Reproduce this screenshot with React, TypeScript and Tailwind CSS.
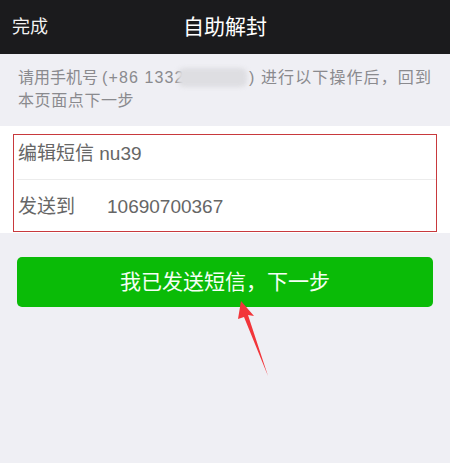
export default function App() {
  return (
    <div
      className="relative w-[450px] h-[463px] bg-[#efeff4] overflow-hidden"
      style={{ fontFamily: '"Liberation Sans", "Noto Sans CJK SC", sans-serif' }}
    >
      {/* Nav bar */}
      <div className="relative h-[54px] bg-[#1b1b1d] flex items-center">
        <span className="pl-3 text-[18px] text-[#f2f2f2]">完成</span>
        <span className="absolute left-0 right-0 text-center text-[21px] text-white pointer-events-none">
          自助解封
        </span>
      </div>

      {/* Notice */}
      <div className="px-[18px] pt-[12px] pb-[14px] text-[16px] leading-[23px] text-[#8a8a8e] whitespace-nowrap">
        <div className="flex items-center">
          <span>请用手机号</span>
          <span className="ml-[4px] tracking-[1.1px]">(+86 1332</span>
          <span className="w-[70px] h-[19px] -ml-[6px] rounded-[6px] bg-[#dedee2] blur-[2px]" />
          <span className="ml-[2px] tracking-[1.1px]">) 进行以下操作后，回到</span>
        </div>
        <div className="tracking-[0.6px]">本页面点下一步</div>
      </div>

      {/* Info rows */}
      <div className="bg-white pt-[8px] pb-[1px]">
        <div className="mx-[13px] border border-[#c8393d]">
          <div className="h-[44px] pb-[6px] flex items-center pl-[4px] text-[19px] text-[#666]">
            编辑短信 nu39
          </div>
          <div className="ml-[3px] h-px bg-[#ececec]" />
          <div className="h-[51px] pt-[3px] flex items-center pl-[4px] text-[19px] text-[#666]">
            <span className="w-[89px]">发送到</span>
            <span>10690700367</span>
          </div>
        </div>
      </div>

      {/* Button */}
      <div className="px-[17px] pt-[24px]">
        <button className="w-[416px] h-[50px] rounded-[5px] bg-[#0abb07] text-[#f4fff4] text-[21px] flex items-center justify-center">
          我已发送短信，下一步
        </button>
      </div>

      {/* Annotation arrow */}
      <svg className="absolute left-0 top-0 pointer-events-none" width="450" height="463">
        <polygon points="241,301 254,316 248,315 268,376 244,317 238,319" fill="#f2353a" />
      </svg>
    </div>
  );
}
